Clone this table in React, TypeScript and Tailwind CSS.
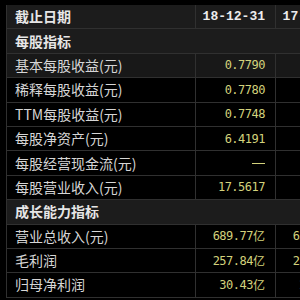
type Row =
  | { kind: "section"; label: string }
  | { kind: "data"; label: string; values: [string, string]; active?: boolean };

const rows: Row[] = [
  { kind: "section", label: "每股指标" },
  { kind: "data", label: "基本每股收益(元)", values: ["0.7790", "0.6912"], active: true },
  { kind: "data", label: "稀释每股收益(元)", values: ["0.7780", "0.6901"] },
  { kind: "data", label: "TTM每股收益(元)", values: ["0.7748", "0.6912"] },
  { kind: "data", label: "每股净资产(元)", values: ["6.4191", "5.8417"] },
  { kind: "data", label: "每股经营现金流(元)", values: ["—", "—"] },
  { kind: "data", label: "每股营业收入(元)", values: ["17.5617", "9.0472"] },
  { kind: "section", label: "成长能力指标" },
  { kind: "data", label: "营业总收入(元)", values: ["689.77亿", "632.33亿"] },
  { kind: "data", label: "毛利润", values: ["257.84亿", "231.06亿"] },
  { kind: "data", label: "归母净利润", values: ["30.43亿", "27.08亿"] },
];

function Value({ text }: { text: string }) {
  if (text === "—") {
    return <span className="block w-[13px] h-px bg-[#d3d27c]" />;
  }
  // 亿 is drawn in the CJK face, the digits in the mono face
  const unit = text.endsWith("亿");
  const num = unit ? text.slice(0, -1) : text;
  return (
    <span className="text-[#d3d27c] flex items-center">
      <span className="font-['DejaVu_Sans_Mono',monospace] text-[12px] tracking-[-0.5px]">{num}</span>
      {unit && <span className="font-['Noto_Sans_CJK_SC',sans-serif] text-[12px]">亿</span>}
    </span>
  );
}

export default function App() {
  return (
    <div className="w-[300px] h-[300px] overflow-hidden bg-black pl-[6px] pt-[5px] font-['Noto_Sans_CJK_SC','Noto_Sans',sans-serif]">
      <div className="w-[360px] border-l border-[#303030]">
        {/* header */}
        <div className="flex h-[24.4px] items-center border-b border-[#303030] bg-[#1c1c1c]">
          <div className="w-[189px] h-full flex items-center pl-[8px] text-[14px] font-bold text-[#e6e6e6] border-r border-[#303030]">
            截止日期
          </div>
          <div className="w-[80px] h-full flex items-center justify-end pr-[10px] font-['Liberation_Mono',monospace] text-[13px] font-bold text-[#ececec] border-r border-[#303030]">
            18-12-31
          </div>
          <div className="w-[80px] h-full flex items-center justify-end pr-[10px] font-['Liberation_Mono',monospace] text-[13px] font-bold text-[#ececec] border-r border-[#303030]">
            17-12-31
          </div>
        </div>

        {rows.map((r, i) =>
          r.kind === "section" ? (
            <div
              key={i}
              className="flex h-[24.4px] items-center border-b border-[#303030] bg-[#1c1c1c] pl-[8px] text-[14px] font-bold text-[#e6e6e6]"
            >
              {r.label}
            </div>
          ) : (
            <div
              key={i}
              className={`flex h-[24.4px] items-center border-b border-[#303030] ${r.active ? "bg-[#181818]" : "bg-black"}`}
            >
              <div className="w-[189px] h-full flex items-center pl-[8px] text-[14px] text-[#d6d6d6] border-r border-[#303030]">
                {r.label}
              </div>
              {r.values.map((v, j) => (
                <div key={j} className="w-[80px] h-full flex items-center justify-end pr-[10px] border-r border-[#303030]">
                  <Value text={v} />
                </div>
              ))}
            </div>
          )
        )}
      </div>
    </div>
  );
}
